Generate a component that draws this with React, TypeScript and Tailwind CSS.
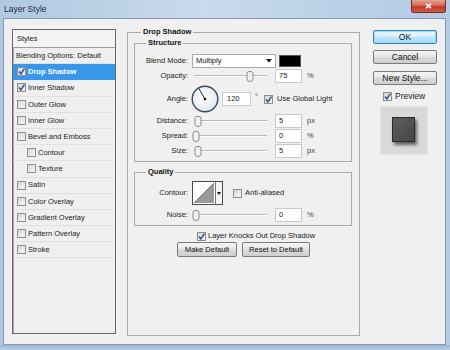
import React from "react";

function Check({ on = false, className = "" }: { on?: boolean; className?: string }) {
  return (
    <span
      className={`relative inline-block w-[9px] h-[9px] shrink-0 border border-[#8f8f8f] bg-[linear-gradient(135deg,#d4d4d4,#f7f7f7)] ${className}`}
    >
      {on && (
        <svg viewBox="0 0 9 9" width="9" height="9" className="absolute -left-px -top-px">
          <path d="M2 4.6 L3.9 7 L7.4 1.6" fill="none" stroke="#3b5393" strokeWidth="1.6" />
        </svg>
      )}
    </span>
  );
}

function Slider({ pos }: { pos: number }) {
  return (
    <div className="relative w-[77px] h-[14px] shrink-0">
      <div className="absolute left-[2px] right-[2px] top-[6px] h-[2px] border-t border-[#b8b8b8] border-b border-b-white" />
      <svg
        className="absolute top-[2px]"
        style={{ left: pos }}
        width="8"
        height="11"
        viewBox="0 0 8 11"
      >
        <path
          d="M1 2.5 Q1 0.5 3 0.5 H5 Q7 0.5 7 2.5 V8 Q7 10.5 4 10.5 Q1 10.5 1 8 Z"
          fill="#f2f2f2"
          stroke="#8a8a8a"
        />
      </svg>
    </div>
  );
}

function Num({ v, w = "w-[27px]", pl = "pl-[3px]" }: { v: string; w?: string; pl?: string }) {
  return (
    <div className={`${w} ${pl} h-[14px] shrink-0 border border-[#c9c9c9] bg-white leading-[12px] text-[#1a1a1a]`}>
      {v}
    </div>
  );
}

function Label({ t }: { t: string }) {
  return <div className="w-[53px] shrink-0 text-right text-[#222]">{t}</div>;
}

function SliderRow({ label, pos, v, unit, cls = "mt-[1px]" }: { label: string; pos: number; v: string; unit: string; cls?: string }) {
  return (
    <div className={`flex items-center h-[14px] ${cls}`}>
      <Label t={label} />
      <div className="ml-[4px]">
        <Slider pos={pos} />
      </div>
      <div className="ml-[6px]">
        <Num v={v} />
      </div>
      <div className="ml-[5px] text-[#444]">{unit}</div>
    </div>
  );
}

function Btn({ children, w, cls = "" }: { children: React.ReactNode; w: string; cls?: string }) {
  return (
    <div
      className={`${w} h-[15px] flex items-center justify-center rounded-[2px] border border-[#7a7a7a] bg-[linear-gradient(#f4f4f4,#e8e8e8_45%,#dadada_50%,#cfcfcf)] text-[#111] ${cls}`}
    >
      {children}
    </div>
  );
}

function Legend({ t, ml }: { t: string; ml: string }) {
  return (
    <div className={`${ml} -mt-[6px] w-fit px-[2px] h-[10px] leading-[10px] bg-[#f0f0f0] font-bold text-[#111]`}>{t}</div>
  );
}

const styleRows: { t: string; on?: boolean; sel?: boolean; sub?: boolean; plain?: boolean }[] = [
  { t: "Blending Options: Default", plain: true },
  { t: "Drop Shadow", on: true, sel: true },
  { t: "Inner Shadow", on: true },
  { t: "Outer Glow" },
  { t: "Inner Glow" },
  { t: "Bevel and Emboss" },
  { t: "Contour", sub: true },
  { t: "Texture", sub: true },
  { t: "Satin" },
  { t: "Color Overlay" },
  { t: "Gradient Overlay" },
  { t: "Pattern Overlay" },
  { t: "Stroke" },
];

export default function App() {
  return (
    <div className="relative w-[450px] h-[350px] overflow-hidden bg-[linear-gradient(90deg,#b2c8e0,#c8daed_45%,#bcd1e7_75%,#b4cbe4)] font-['Liberation_Sans',Arial,sans-serif] text-[7.5px] text-[#222]">
      {/* title bar */}
      <div className="h-[18px] flex items-center pl-[4px] pt-[1px] text-[8.5px] text-[#1c2a3a]">Layer Style</div>
      <div className="absolute top-0 right-[4px] w-[35px] h-[13px] rounded-b-[3px] border border-t-0 border-[#6e2d25] bg-[linear-gradient(#e5a595,#d2685a_45%,#c13a2c_55%,#cf5a45)] flex items-center justify-center">
        <svg width="7" height="6" viewBox="0 0 7 6">
          <path d="M1 0.8 L6 5.2 M6 0.8 L1 5.2" stroke="white" strokeWidth="1.6" />
        </svg>
      </div>

      {/* content */}
      <div className="ml-[3px] w-[443px] h-[327px] bg-[#f0f0f0] border border-[#8699b0] flex items-start">
        {/* left styles panel */}
        <div className="ml-[8px] mt-[10px] w-[104px] h-[305px] border border-[#666] shadow-[inset_1px_1px_0_#a8a8a8] bg-[#efefef]">
          <div className="h-[18px] flex items-center pl-[4px] border-b border-[#9c9c9c] bg-[#f3f3f3]">Styles</div>
          {styleRows.map((r) => (
            <div
              key={r.t}
              className={`h-[16.2px] flex items-center border-b ${
                r.sel ? "bg-[#3996ea] text-white font-bold border-[#3996ea]" : "border-[#e0e0e0]"
              } ${r.plain ? "pl-[3px]" : r.sub ? "pl-[14px]" : "pl-[4px]"}`}
            >
              {!r.plain && <Check on={r.on} className="mr-[2px]" />}
              <span>{r.t}</span>
            </div>
          ))}
        </div>

        {/* middle */}
        <div className="ml-[11px] mt-[13px] w-[233px] h-[304px] border border-[#aaa]">
          <Legend t="Drop Shadow" ml="ml-[13px]" />

          {/* Structure */}
          <div className="ml-[6px] mt-[6px] w-[218px] border border-[#aaa] pb-[3px]">
            <Legend t="Structure" ml="ml-[11px]" />
            <div className="flex items-center h-[14px] mt-[6px]">
              <Label t="Blend Mode:" />
              <div className="ml-[4px] w-[84px] h-[14px] border border-[#a9a9a9] bg-white flex items-center pl-[3px] pr-[3px] text-[#111]">
                <span className="flex-1">Multiply</span>
                <svg width="6" height="4" viewBox="0 0 6 4">
                  <path d="M0 0 H6 L3 3.5 Z" fill="#111" />
                </svg>
              </div>
              <div className="ml-[3px] w-[22px] h-[12px] border border-[#555] bg-black" />
            </div>
            <SliderRow label="Opacity:" pos={54} v="75" unit="%" />
            <div className="flex items-center h-[28px] mt-[2px]">
              <Label t="Angle:" />
              <svg className="ml-[3px] shrink-0" width="28" height="28" viewBox="0 0 28 28">
                <defs>
                  <radialGradient id="dial" cx="0.45" cy="0.4" r="0.6">
                    <stop offset="0" stopColor="#ffffff" />
                    <stop offset="1" stopColor="#e4e8ef" />
                  </radialGradient>
                </defs>
                <circle cx="14" cy="14" r="12.8" fill="url(#dial)" stroke="#3a4868" strokeWidth="1.4" />
                <line x1="14" y1="14" x2="8" y2="3.8" stroke="#1a1a1a" strokeWidth="1" />
                <circle cx="14" cy="14" r="1.3" fill="#111" />
              </svg>
              <div className="ml-[3px]">
                <Num v="120" w="w-[29px]" pl="pl-[4px]" />
              </div>
              <div className="ml-[4px] -mt-[5px] text-[#444]">°</div>
              <Check on className="ml-[6px]" />
              <div className="ml-[4px] text-[#222]">Use Global Light</div>
            </div>
            <SliderRow label="Distance:" pos={2} v="5" unit="px" />
            <SliderRow label="Spread:" pos={0} v="0" unit="%" />
            <SliderRow label="Size:" pos={2} v="5" unit="px" />
          </div>

          {/* Quality */}
          <div className="ml-[6px] mt-[10px] w-[218px] border border-[#aaa] pb-[3px]">
            <Legend t="Quality" ml="ml-[11px]" />
            <div className="flex items-center h-[24px] mt-[4px]">
              <Label t="Contour:" />
              <div className="ml-[4px] w-[31px] h-[24px] border border-[#4a4a4a] bg-white flex">
                <svg width="22" height="22" viewBox="0 0 22 22" className="shrink-0">
                  <path d="M1 21 L21 1 V21 Z" fill="#9a9a9a" />
                  <path d="M1 21 L21 1" stroke="#5a5a5a" strokeWidth="0.8" />
                </svg>
                <div className="flex-1 border-l border-[#777] bg-[#f4f4f4] flex items-center justify-center">
                  <svg width="4" height="3" viewBox="0 0 4 3">
                    <path d="M0 0 H4 L2 3 Z" fill="#111" />
                  </svg>
                </div>
              </div>
              <Check className="ml-[10px]" />
              <div className="ml-[3px]">Anti-aliased</div>
            </div>
            <SliderRow label="Noise:" pos={0} v="0" unit="%" cls="mt-[3px]" />
          </div>

          <div className="flex items-center h-[10px] mt-[5px] ml-[69px]">
            <Check on />
            <div className="ml-[2px] text-[#222]">Layer Knocks Out Drop Shadow</div>
          </div>
          <div className="flex mt-[1px] ml-[49px] gap-[5px]">
            <Btn w="w-[60px]">Make Default</Btn>
            <Btn w="w-[68px]">Reset to Default</Btn>
          </div>
        </div>

        {/* right column */}
        <div className="ml-[13px] mt-[11px] w-[64px] flex flex-col text-[8.5px]">
          <div className="h-[14px] flex items-center justify-center rounded-[2px] border border-[#3d7fb2] shadow-[inset_0_0_0_1px_#9fdcf8] bg-[linear-gradient(#eaf6fd,#d9f0fc_45%,#bee6fd_50%,#a7d9f5)] text-[#111]">
            OK
          </div>
          <div className="mt-[6px] h-[14px] flex items-center justify-center rounded-[2px] border border-[#7a7a7a] bg-[linear-gradient(#f4f4f4,#e8e8e8_45%,#dadada_50%,#cfcfcf)] text-[#111]">
            Cancel
          </div>
          <div className="mt-[7px] h-[14px] flex items-center justify-center rounded-[2px] border border-[#7a7a7a] bg-[linear-gradient(#f4f4f4,#e8e8e8_45%,#dadada_50%,#cfcfcf)] text-[#111]">
            New Style...
          </div>
          <div className="mt-[6px] h-[10px] flex items-center ml-[10px]">
            <Check on />
            <div className="ml-[3px] text-[#222]">Preview</div>
          </div>
          <div className="mt-[5px] ml-[7px] w-[48px] h-[49px] bg-[#d9d9d9] border border-[#e6e6e6] flex items-center justify-center">
            <div className="w-[23px] h-[25px] -mt-[3px] -ml-[2px] border border-[#2a2a2a] bg-[linear-gradient(135deg,#5e5e5e,#464646)] shadow-[2px_3px_3px_rgba(0,0,0,0.55)]" />
          </div>
        </div>
      </div>
      <div className="h-[5px] bg-[linear-gradient(#9cb7d4,#b7cce3)]" />
    </div>
  );
}
